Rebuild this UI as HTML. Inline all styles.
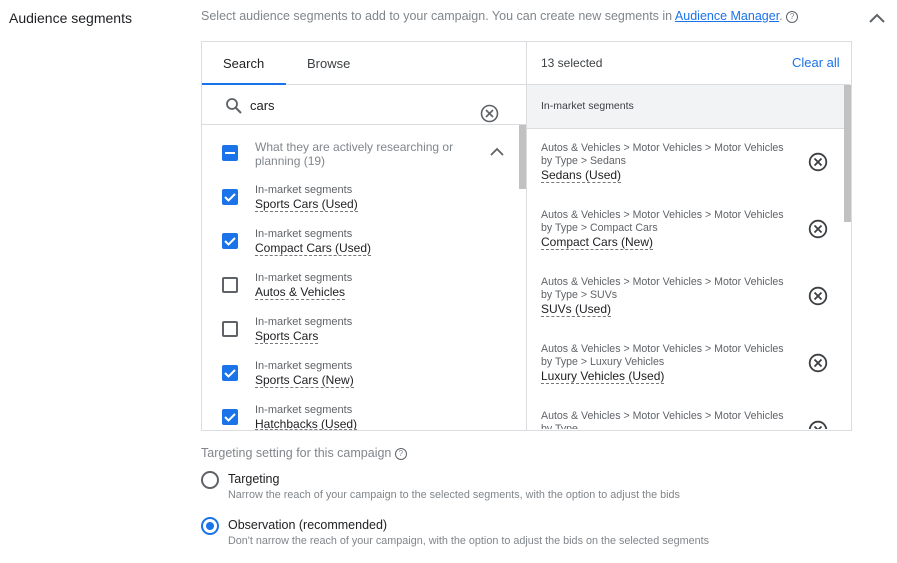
<!DOCTYPE html><html><head><style>
body{margin:0;width:897px;height:563px;background:#fff;font-family:"Liberation Sans",Arial,sans-serif;position:relative;overflow:hidden;color:#3c4043}
.a{position:absolute;white-space:nowrap}
.cb{position:absolute;left:222px;width:16px;height:16px;border-radius:2px;box-sizing:border-box}
.on{background:#1a73e8}
.off{border:2px solid #5f6368}
.sm{font-size:11px;color:#5f6368}
.nm{font-size:12px;color:#202124;border-bottom:1px dashed #777;line-height:14px}
.r1{font-size:10.6px;color:#5f6368;line-height:13px}
</style></head><body>
<div class="a" style="left:9px;top:10px;font-size:14px;color:#202124">Audience segments</div>
<div class="a" style="left:201px;top:9px;font-size:12.5px;color:#80868b">Select audience segments to add to your campaign. You can create new segments in <span style="text-decoration:underline;color:#1a73e8">Audience Manager</span>. <span style="display:inline-block;width:10px;height:10px;border:1.3px solid #5f6368;border-radius:50%;font-size:8px;text-align:center;line-height:10px;vertical-align:1px">?</span></div>
<svg class="a" style="left:868px;top:12px" width="18" height="12"><path d="M2 10L9 3L16 10" stroke="#5f6368" stroke-width="2" fill="none"/></svg>

<div class="a" style="left:201px;top:41px;width:649px;height:388px;border:1px solid #dadce0"></div>
<div class="a" style="left:526px;top:42px;width:1px;height:388px;background:#dadce0"></div>
<div class="a" style="left:202px;top:84px;width:324px;height:1px;background:#dadce0"></div>
<div class="a" style="left:202px;top:83px;width:84px;height:2px;background:#1a73e8"></div>
<div class="a" style="left:223px;top:56px;font-size:13px;color:#202124">Search</div>
<div class="a" style="left:307px;top:56px;font-size:13px;color:#3c4043">Browse</div>
<svg class="a" style="left:225px;top:97px" width="18" height="18"><circle cx="7" cy="7" r="5" stroke="#5f6368" stroke-width="1.8" fill="none"/><path d="M11 11L16 16" stroke="#5f6368" stroke-width="2"/></svg>
<div class="a" style="left:250px;top:98px;font-size:13px;color:#202124">cars</div>
<svg class="a" style="left:480px;top:104px" width="19" height="19"><circle cx="9.5" cy="9.5" r="8" stroke="#5f6368" stroke-width="1.6" fill="none"/><path d="M6 6L13 13M13 6L6 13" stroke="#5f6368" stroke-width="1.6"/></svg>
<div class="a" style="left:202px;top:124px;width:324px;height:1px;background:#dadce0"></div>
<div class="a" style="left:519px;top:125px;width:7px;height:64px;background:#c1c1c1"></div>

<div class="cb on" style="top:145px"><div style="position:absolute;left:3px;top:7px;width:10px;height:2px;background:#fff"></div></div>
<div class="a" style="left:255px;top:140px;font-size:12px;color:#80868b;line-height:14px;white-space:normal;width:210px">What they are actively researching or planning (19)</div>
<svg class="a" style="left:489px;top:147px" width="16" height="10"><path d="M2 8L8 2L14 8" stroke="#5f6368" stroke-width="1.8" fill="none"/></svg>

<div class="cb on" style="top:189px"><svg width="16" height="16"><path d="M3 8L6.5 11.5L13 5" stroke="#fff" stroke-width="2" fill="none"/></svg></div>
<div class="a sm" style="left:255px;top:184px">In-market segments</div><div class="a nm" style="left:255px;top:197px">Sports Cars (Used)</div>
<div class="cb on" style="top:233px"><svg width="16" height="16"><path d="M3 8L6.5 11.5L13 5" stroke="#fff" stroke-width="2" fill="none"/></svg></div>
<div class="a sm" style="left:255px;top:228px">In-market segments</div><div class="a nm" style="left:255px;top:241px">Compact Cars (Used)</div>
<div class="cb off" style="top:277px"></div>
<div class="a sm" style="left:255px;top:272px">In-market segments</div><div class="a nm" style="left:255px;top:285px">Autos &amp; Vehicles</div>
<div class="cb off" style="top:321px"></div>
<div class="a sm" style="left:255px;top:316px">In-market segments</div><div class="a nm" style="left:255px;top:329px">Sports Cars</div>
<div class="cb on" style="top:365px"><svg width="16" height="16"><path d="M3 8L6.5 11.5L13 5" stroke="#fff" stroke-width="2" fill="none"/></svg></div>
<div class="a sm" style="left:255px;top:360px">In-market segments</div><div class="a nm" style="left:255px;top:373px">Sports Cars (New)</div>
<div class="cb on" style="top:409px"><svg width="16" height="16"><path d="M3 8L6.5 11.5L13 5" stroke="#fff" stroke-width="2" fill="none"/></svg></div>
<div class="a sm" style="left:255px;top:404px">In-market segments</div><div class="a nm" style="left:255px;top:417px;height:12px;overflow:hidden">Hatchbacks (Used)</div>

<div class="a" style="left:541px;top:56px;font-size:12px;color:#3c4043">13 selected</div>
<div class="a" style="left:792px;top:55px;font-size:13px;color:#1a73e8">Clear all</div>
<div class="a" style="left:527px;top:84px;width:323px;height:45px;background:#f1f3f4;border-top:1px solid #dadce0;border-bottom:1px solid #dadce0;box-sizing:border-box"></div>
<div class="a" style="left:541px;top:100px;font-size:10.5px;color:#3c4043">In-market segments</div>
<div class="a" style="left:844px;top:85px;width:7px;height:137px;background:#c1c1c1"></div>
<div class="a" style="left:527px;top:130px;width:317px;height:299px;overflow:hidden">
<div class="a r1" style="left:14px;top:12px">Autos &amp; Vehicles &gt; Motor Vehicles &gt; Motor Vehicles<br>by Type &gt; Sedans</div><div class="a nm" style="left:14px;top:38px">Sedans (Used)</div>
<div class="a r1" style="left:14px;top:79px">Autos &amp; Vehicles &gt; Motor Vehicles &gt; Motor Vehicles<br>by Type &gt; Compact Cars</div><div class="a nm" style="left:14px;top:105px">Compact Cars (New)</div>
<div class="a r1" style="left:14px;top:146px">Autos &amp; Vehicles &gt; Motor Vehicles &gt; Motor Vehicles<br>by Type &gt; SUVs</div><div class="a nm" style="left:14px;top:172px">SUVs (Used)</div>
<div class="a r1" style="left:14px;top:213px">Autos &amp; Vehicles &gt; Motor Vehicles &gt; Motor Vehicles<br>by Type &gt; Luxury Vehicles</div><div class="a nm" style="left:14px;top:239px">Luxury Vehicles (Used)</div>
<div class="a r1" style="left:14px;top:280px">Autos &amp; Vehicles &gt; Motor Vehicles &gt; Motor Vehicles<br>by Type</div>
<svg class="a" style="left:281px;top:22px" width="20" height="20"><circle cx="10" cy="10" r="8.3" stroke="#3c4043" stroke-width="1.8" fill="none"/><path d="M6.5 6.5L13.5 13.5M13.5 6.5L6.5 13.5" stroke="#3c4043" stroke-width="1.8"/></svg>
<svg class="a" style="left:281px;top:89px" width="20" height="20"><circle cx="10" cy="10" r="8.3" stroke="#3c4043" stroke-width="1.8" fill="none"/><path d="M6.5 6.5L13.5 13.5M13.5 6.5L6.5 13.5" stroke="#3c4043" stroke-width="1.8"/></svg>
<svg class="a" style="left:281px;top:156px" width="20" height="20"><circle cx="10" cy="10" r="8.3" stroke="#3c4043" stroke-width="1.8" fill="none"/><path d="M6.5 6.5L13.5 13.5M13.5 6.5L6.5 13.5" stroke="#3c4043" stroke-width="1.8"/></svg>
<svg class="a" style="left:281px;top:223px" width="20" height="20"><circle cx="10" cy="10" r="8.3" stroke="#3c4043" stroke-width="1.8" fill="none"/><path d="M6.5 6.5L13.5 13.5M13.5 6.5L6.5 13.5" stroke="#3c4043" stroke-width="1.8"/></svg>
<svg class="a" style="left:281px;top:290px" width="20" height="20"><circle cx="10" cy="10" r="8.3" stroke="#3c4043" stroke-width="1.8" fill="none"/><path d="M6.5 6.5L13.5 13.5M13.5 6.5L6.5 13.5" stroke="#3c4043" stroke-width="1.8"/></svg>
</div>

<div class="a" style="left:201px;top:446px;font-size:12.5px;color:#80868b">Targeting setting for this campaign <span style="display:inline-block;width:10px;height:10px;border:1.3px solid #5f6368;border-radius:50%;font-size:8px;text-align:center;line-height:10px;vertical-align:1px">?</span></div>
<div class="a" style="left:201px;top:471px;width:14px;height:14px;border:2px solid #5f6368;border-radius:50%"></div>
<div class="a" style="left:228px;top:472px;font-size:12.5px;color:#202124">Targeting</div>
<div class="a" style="left:228px;top:489px;font-size:10.8px;color:#80868b">Narrow the reach of your campaign to the selected segments, with the option to adjust the bids</div>
<div class="a" style="left:201px;top:517px;width:14px;height:14px;border:2px solid #1a73e8;border-radius:50%"><div style="margin:3px;width:8px;height:8px;border-radius:50%;background:#1a73e8"></div></div>
<div class="a" style="left:228px;top:518px;font-size:12.5px;color:#202124">Observation (recommended)</div>
<div class="a" style="left:228px;top:535px;font-size:10.8px;color:#80868b">Don't narrow the reach of your campaign, with the option to adjust the bids on the selected segments</div>
</body></html>
